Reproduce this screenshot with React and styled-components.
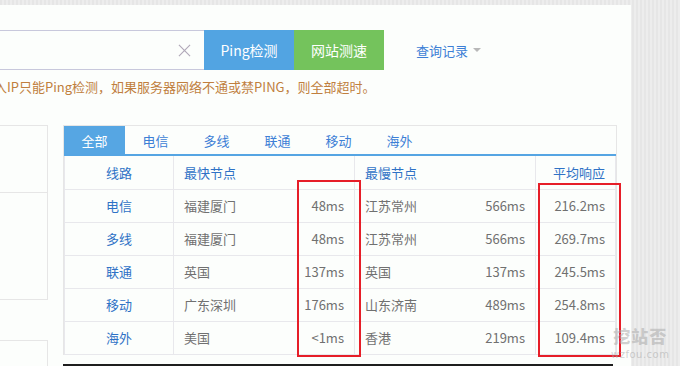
import React from "react";
import styled, { createGlobalStyle } from "styled-components";

const rows = [
    { line: "电信", fast: "福建厦门", fastMs: "48ms", slow: "江苏常州", slowMs: "566ms", avg: "216.2ms" },
    { line: "多线", fast: "福建厦门", fastMs: "48ms", slow: "江苏常州", slowMs: "566ms", avg: "269.7ms" },
    { line: "联通", fast: "英国", fastMs: "137ms", slow: "英国", slowMs: "137ms", avg: "245.5ms" },
    { line: "移动", fast: "广东深圳", fastMs: "176ms", slow: "山东济南", slowMs: "489ms", avg: "254.8ms" },
    { line: "海外", fast: "美国", fastMs: "<1ms", slow: "香港", slowMs: "219ms", avg: "109.4ms" },
];

const tabs = ["全部", "电信", "多线", "联通", "移动", "海外"];

function App() {
    return (
        <>
            <GlobalStyle />
            <Page>
                <Main>
                    <SearchRow>
                        <SearchInput>
                            <ClearIcon viewBox="0 0 14 14">
                                <path d="M1 1 L13 13 M13 1 L1 13" />
                            </ClearIcon>
                        </SearchInput>
                        <Button color="#52a4e2">Ping检测</Button>
                        <Button color="#74c35c">网站测速</Button>
                        <History>
                            查询记录
                            <Caret />
                        </History>
                    </SearchRow>
                    <Hint>入IP只能Ping检测，如果服务器网络不通或禁PING，则全部超时。</Hint>
                    <Content>
                        <Side>
                            <SideBox h={66} />
                            <SideBox h={106} noTop />
                            <SideBox h={40} gap />
                        </Side>
                        <Right>
                            <Card>
                                <Tabs>
                                    {tabs.map((t, i) => (
                                        <Tab key={t} active={i === 0}>
                                            {t}
                                        </Tab>
                                    ))}
                                </Tabs>
                                <Table>
                                    <colgroup>
                                        <col style={{ width: 109 }} />
                                        <col style={{ width: 181 }} />
                                        <col style={{ width: 181 }} />
                                        <col />
                                    </colgroup>
                                    <thead>
                                        <tr>
                                            <Th center>线路</Th>
                                            <Th>最快节点</Th>
                                            <Th>最慢节点</Th>
                                            <Th right>平均响应</Th>
                                        </tr>
                                    </thead>
                                    <tbody>
                                        {rows.map((r) => (
                                            <tr key={r.line}>
                                                <LineCell>{r.line}</LineCell>
                                                <Td>
                                                    <Split>
                                                        <span>{r.fast}</span>
                                                        <span>{r.fastMs}</span>
                                                    </Split>
                                                </Td>
                                                <Td>
                                                    <Split>
                                                        <span>{r.slow}</span>
                                                        <span>{r.slowMs}</span>
                                                    </Split>
                                                </Td>
                                                <Td right>{r.avg}</Td>
                                            </tr>
                                        ))}
                                    </tbody>
                                </Table>
                                <Mark left={233} top={54} w={64} h={177} />
                                <Mark left={474} top={57} w={83} h={174} />
                            </Card>
                            <DarkEdge />
                        </Right>
                    </Content>
                </Main>
                <Gutter>
                    <Watermark>
                        <b>挖站否</b>
                        <small>wzfou.com</small>
                    </Watermark>
                </Gutter>
            </Page>
        </>
    );
}

export default App;

const GlobalStyle = createGlobalStyle`
    body {
        margin: 0;
        background: #e8e8e8;
        font-family: "Noto Sans CJK SC", "Noto Sans", sans-serif;
        overflow: hidden;
    }
`;
const Page = styled.div`
    display: flex;
    height: 366px;
    padding-top: 5px;
    box-sizing: border-box;
    background: repeating-linear-gradient(90deg, #e6e6e6 0 2px, #ededed 2px 4px);
`;
const Main = styled.div`
    width: 631px;
    background: #fcfefc;
    overflow: hidden;
`;
const Gutter = styled.div`
    flex: 1;
    position: relative;
`;
const Watermark = styled.div`
    position: absolute;
    left: -20px;
    top: 322px;
    display: flex;
    flex-direction: column;
    align-items: center;
    gap: 5px;
    color: rgba(170, 170, 170, 0.55);
    b {
        font-size: 17px;
        line-height: 17px;
        letter-spacing: 1px;
        font-weight: 900;
    }
    small {
        font-family: "DejaVu Sans", sans-serif;
        font-size: 10px;
        line-height: 11px;
        letter-spacing: 0.5px;
    }
`;
const SearchRow = styled.div`
    display: flex;
    align-items: center;
    margin-top: 25px;
    height: 40px;
`;
const SearchInput = styled.div`
    width: 204px;
    height: 40px;
    box-sizing: border-box;
    border-top: 1px solid #c8c8dc;
    border-bottom: 1px solid #c8c8dc;
    display: flex;
    align-items: center;
    justify-content: flex-end;
    padding-right: 13px;
`;
const ClearIcon = styled.svg`
    width: 13px;
    height: 13px;
    path {
        stroke: #b0a8b8;
        stroke-width: 1.2;
        fill: none;
    }
`;
const Button = styled.div`
    width: 90px;
    height: 40px;
    background: ${(p) => p.color};
    color: #fff;
    font-size: 14px;
    display: flex;
    align-items: center;
    justify-content: center;
`;
const History = styled.div`
    margin-left: 32px;
    color: #3d7fd6;
    font-size: 13px;
    display: flex;
    align-items: center;
`;
const Caret = styled.span`
    margin-left: 5px;
    width: 0;
    height: 0;
    border-left: 4px solid transparent;
    border-right: 4px solid transparent;
    border-top: 4px solid #b8b8b8;
`;
const Hint = styled.div`
    margin-top: 7px;
    font-size: 13px;
    line-height: 20px;
    color: #c07f3e;
    text-indent: -6px;
    white-space: nowrap;
`;
const Content = styled.div`
    display: flex;
    margin-top: 28px;
    gap: 15px;
`;
const Side = styled.div`
    width: 48px;
    flex-shrink: 0;
`;
const SideBox = styled.div`
    height: ${(p) => p.h}px;
    border: 1px solid #e6e6e6;
    border-left: none;
    border-top: ${(p) => (p.noTop ? "none" : "1px solid #e6e6e6")};
    margin-top: ${(p) => (p.gap ? "40px" : "0")};
`;
const Right = styled.div`
    width: 554px;
`;
const Card = styled.div`
    position: relative;
    border: 1px solid #e6e6e6;
    border-bottom: none;
`;
const Tabs = styled.div`
    display: flex;
    height: 28px;
    border-bottom: 2px solid #55a5e3;
`;
const Tab = styled.div`
    width: 61px;
    display: flex;
    align-items: center;
    justify-content: center;
    font-size: 13px;
    color: ${(p) => (p.active ? "#fff" : "#3d7fd6")};
    background: ${(p) => (p.active ? "#56a6e3" : "transparent")};
`;
const Table = styled.table`
    width: 100%;
    border-collapse: collapse;
    table-layout: fixed;
    font-size: 13px;
    tr {
        height: 33px;
    }
`;
const Th = styled.th`
    font-weight: normal;
    color: #2f72c6;
    text-align: ${(p) => (p.center ? "center" : p.right ? "right" : "left")};
    padding: 0 10px;
    border: 1px solid #e8e8ec;
    border-top: none;
`;
const Td = styled.td`
    color: #707070;
    padding: 0 10px;
    text-align: ${(p) => (p.right ? "right" : "left")};
    border: 1px solid #e8e8ec;
    white-space: nowrap;
`;
const LineCell = styled(Td)`
    color: #2f72c6;
    text-align: center;
`;
const Split = styled.div`
    display: flex;
    justify-content: space-between;
`;
const Mark = styled.div`
    position: absolute;
    left: ${(p) => p.left}px;
    top: ${(p) => p.top}px;
    width: ${(p) => p.w}px;
    height: ${(p) => p.h}px;
    border: 2px solid #e61e28;
    box-sizing: border-box;
`;
const DarkEdge = styled.div`
    margin-top: 9px;
    width: 550px;
    height: 3px;
    background: #1e1e1e;
`;
